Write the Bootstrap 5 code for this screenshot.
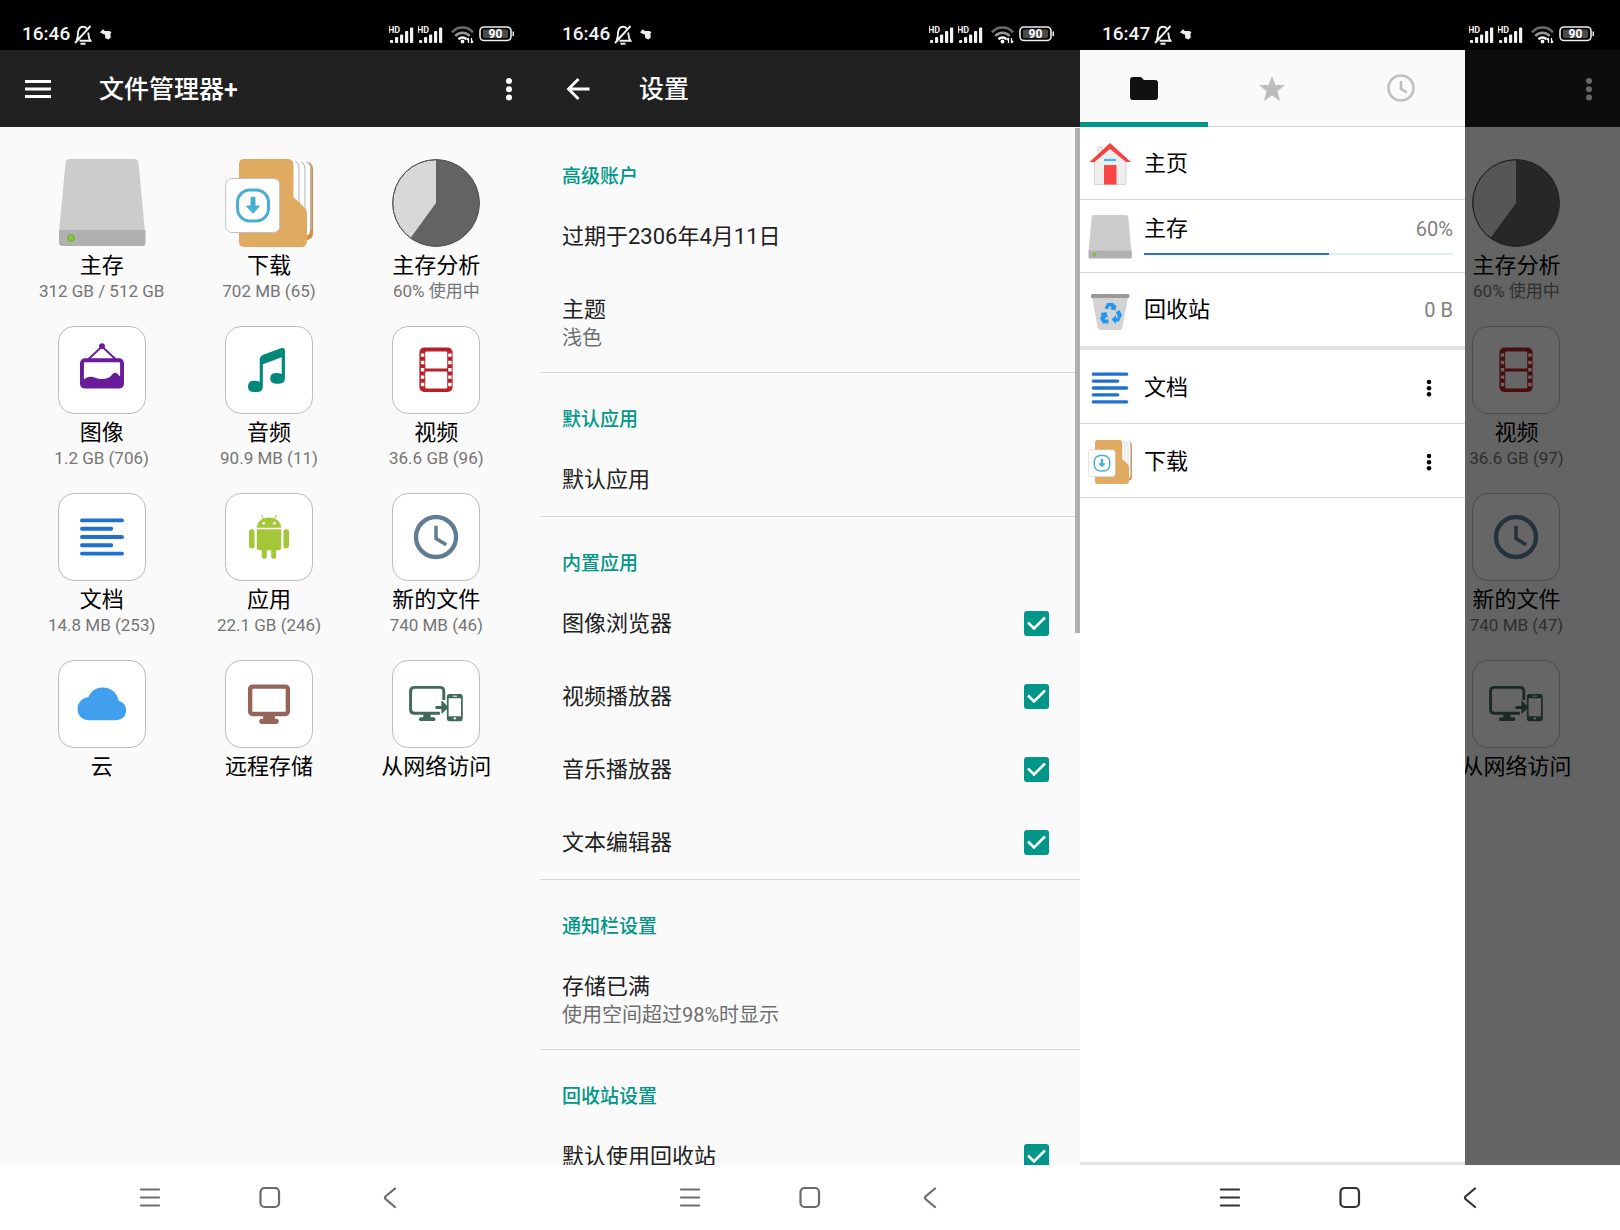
<!DOCTYPE html>
<html lang="zh-CN">
<head>
<meta charset="utf-8">
<meta name="viewport" content="width=device-width, initial-scale=1">
<title>文件管理器+</title>
<link href="https://cdn.jsdelivr.net/npm/bootstrap@5.3.0/dist/css/bootstrap.min.css" rel="stylesheet">
<style>
body { font-family: Roboto, "Noto Sans CJK SC", sans-serif; background: #fff; color: #000; }
svg { display: block; flex-shrink: 0; }
button { border: 0; background: none; padding: 0; color: inherit; font: inherit; }
a { color: inherit; text-decoration: none; }
.status-bar { height: 50px; background: #000; color: #f2f2f2; padding: 18px 25px 0 22px; }
.clock-text { font-size: 19px; line-height: 32px; font-weight: 500; }
.bell { margin: 7px 0 0 4px; }
.app-bar { height: 77px; background: #212121; color: #fff; padding: 0 11px 0 18px; }
.app-title { font-size: 25px; line-height: 32px; font-weight: 500; margin: 0 0 0 41px; padding-top: 2px; }
.icon-btn { width: 40px; height: 40px; display: flex; align-items: center; justify-content: center; }
.screen { background: #fafafa; }
.tile-grid { padding: 32px 20px 0 18px; }
.tile { display: block; height: 167px; text-align: center; white-space: nowrap; }
.tile svg { margin: 0 auto 5px; }
.tile-name { font-size: 22px; line-height: 28px; }
.tile-info { font-size: 17px; line-height: 22px; color: #757575; }
.framed { background: #fff; border: 1px solid #bdbdbd; border-radius: 16px; }
.nav-keys { height: 65px; background: #fff; color: #6c6c6c; }
.nav-keys.strong { color: #333; }
.nav-key { width: 120px; height: 65px; display: flex; align-items: center; justify-content: center; }
.pref-scroll { flex: 1 1 0; min-height: 0; overflow: hidden; padding-top: 2px; }
.pref-head { border-top: 1px solid #d6d6d6; padding: 35px 22px 11px; margin: 0; font-size: 19px; line-height: 24px; font-weight: 500; color: #009688; }
.pref-head.first { border-color: transparent; }
.pref-item { min-height: 73px; padding: 0 31px 0 22px; font-size: 22px; color: #212121; }
.pref-tall { padding: 23px 22px 20px; font-size: 22px; line-height: 28px; color: #212121; }
.pref-note { font-size: 20px; line-height: 28px; color: #6e6e6e; }
.form-check-input.tick { width: 25px; height: 25px; margin: 0; border: 0; border-radius: 3px; }
.form-check-input.tick:checked { background-color: #009688; background-size: 100% 100%; background-image: url("data:image/svg+xml,%3Csvg xmlns='http://www.w3.org/2000/svg' viewBox='0 0 25 25'%3E%3Cpath d='M4 11.5l6 6L21 6.500' fill='none' stroke='%23fff' stroke-width='2.600'/%3E%3C/svg%3E"); }
.scroll-thumb { position: absolute; top: 1px; right: 0; width: 5px; height: 505px; background: #b0b0b0; }
.drawer { flex: 0 0 71.3%; background: #fff; }
.tabs { height: 77px; background: #fafafa; border-bottom: 1px solid #d0d0d0; }
.tab-btn { flex: 1 1 0; height: 77px; display: flex; align-items: center; justify-content: center; color: #bdbdbd; padding-top: 4px; border-bottom: 5px solid transparent; }
.tab-btn.current { color: #111; border-color: #009688; }
.drawer-row { height: 73px; border-bottom: 1px solid #d8d8d8; padding: 1px 12px 0 8px; font-size: 22px; line-height: 28px; }
.drawer-row.last-fixed { border-bottom: 0; }
.drawer-row.folder-row { height: 74px; padding-top: 2px; }
.drawer-gap { height: 4px; background: #e2e2e2; }
.drawer-end { height: 3px; background: #e2e2e2; }
.amount { font-size: 20px; color: #808080; }
.usage-block { padding-bottom: 4px; }
.usage { height: 2px; border-radius: 0; background: #e4eef2; margin-top: 10px; }
.usage .progress-bar { background: #2f6fd0; }
.strip { min-width: 0; overflow: hidden; position: relative; }
.strip-tiles { padding: 32px 20px 0 0; }
.strip-tiles .tile { width: 167px; }
.scrim { position: absolute; inset: 0; background: rgba(0,0,0,.6); }
</style>
<script src="https://cdn.jsdelivr.net/npm/bootstrap@5.3.0/dist/js/bootstrap.bundle.min.js"></script>
</head>
<body>
<svg width="0" height="0" class="position-absolute" aria-hidden="true">
<defs>
<symbol id="i-bell" viewBox="0 0 18 20"><g fill="none" stroke="#f2f2f2" stroke-width="1.900"><path d="M2.500 15C4.600 12.500 3.600 9 4.200 6.500 5 3 7 1.800 9.300 1.800c1.700 0 3 .8 3.900 2.200M14.200 7.500c.5 3 .1 5.500 2.300 8.300H5.500M16.500 1L1 18M6.500 18.800h5"/></g></symbol>
<symbol id="i-blob" viewBox="0 0 10 10"><path d="M0 3.500L2.500 1l1.500 1.500L8 2.500l1.500 1-.8 1.500L9 8 7 9.500 4.500 8.500 4 5.500 2.500 5z" fill="#eee"/></symbol>
<symbol id="i-signal" viewBox="0 0 25 18"><text x="-1" y="7" font-size="9" font-weight="700" fill="#eee" font-family="Roboto, sans-serif">HD</text><g fill="#f2f2f2"><rect x="1" y="14" width="3.200" height="3" rx="1"/><rect x="6" y="11" width="3.200" height="6" rx="1"/><rect x="11" y="8.500" width="3.200" height="8.500" rx="1"/><rect x="16" y="5" width="3.200" height="12" rx="1"/><rect x="21" y="1.500" width="3.200" height="15.500" rx="1"/></g></symbol>
<symbol id="i-wifi" viewBox="0 0 24 18"><g fill="none" stroke-width="2.600"><path d="M1 6.300a14 14 0 0 1 21 0" stroke="#6a6a6a"/><path d="M4.400 10a9.500 9.500 0 0 1 14.200 0" stroke="#9a9a9a"/><path d="M7.500 13.200a5.800 5.800 0 0 1 8 0" stroke="#fff"/></g><circle cx="11.500" cy="15.500" r="1.900" fill="#fff"/><path d="M17.500 12v5M17.500 12l-1.500 2M20.500 17v-5M20.500 17l1.500-2" stroke="#fff" stroke-width="1.300"/></symbol>
<symbol id="i-battery" viewBox="0 0 36 16"><rect x="1" y="1" width="31" height="13.500" rx="4" fill="none" stroke="#eee" stroke-width="1.600"/><rect x="4" y="3.500" width="25" height="8.500" rx="1.500" fill="#4a4a4a"/><rect x="33.500" y="5.500" width="1.500" height="4.500" fill="#eee"/><text x="16.500" y="12" text-anchor="middle" font-size="12" font-weight="700" fill="#fff" font-family="Roboto, sans-serif">90</text></symbol>
<symbol id="i-dots" viewBox="0 0 8 24"><circle cx="4" cy="4" r="3"/><circle cx="4" cy="12.200" r="3"/><circle cx="4" cy="20.400" r="3"/></symbol>
<symbol id="i-drive" viewBox="0 0 88 88"><path d="M12 0h64q4 0 4.500 4L87 73H1L7.500 4Q8 0 12 0z" fill="#cccccd"/><path d="M1 71h86.500v13q0 3-3 3H4q-3 0-3-3z" fill="#b0b0b1"/><circle cx="13" cy="79" r="3.300" fill="#8bc832" stroke="#6fa83a"/></symbol>
<symbol id="i-folder" viewBox="0 0 88 88"><path d="M66 2h15q7 2 7 8v64q0 6-6 7H66z" fill="#cf9046"/><path d="M66 1.500h14q5 1 5 6V72q0 4-4 5H66z" fill="#fff"/><path d="M70 2q4 2 4 7v36M76 3q4 2 4 7v40M81 3q5 2 5 8v60" fill="none" stroke="#b9bfc6" stroke-width="1.200"/><path d="M19 0h44q5.500 0 5.500 6v32L80 49q2 2 2 5v28q0 6-6 6H19q-5 0-5-5V5q0-5 5-5z" fill="#e0ab60"/><rect x=".7" y="19.500" width="54" height="54" rx="6" fill="#fff" stroke="#bfbfbf"/><rect x="12.500" y="31" width="31" height="31" rx="12.500" fill="none" stroke="#49afd2" stroke-width="3"/><path d="M25.500 39q0-1.500 2.500-1.500t2.500 1.500v7.500h3.500q1.500 0 .5 1.300L28.800 54q-.8.900-1.600 0l-5.700-6.200q-1-1.300.5-1.300h3.500z" fill="#49afd2"/></symbol>
<symbol id="i-pie" viewBox="0 0 88 88"><circle cx="44" cy="44" r="43.300" fill="#d8d8d8" stroke="#666"/><path d="M44 44V.7A43.300 43.300 0 1 1 18.500 79z" fill="#636363"/><circle cx="44" cy="44" r="43.300" fill="none" stroke="#555"/></symbol>
<symbol id="i-image" viewBox="0 0 88 88"><g fill="none" stroke="#6a1b9a"><path d="M30 33L44 20l14 13" stroke-width="2"/><rect x="23.500" y="34" width="41" height="27" rx="3" stroke-width="4"/></g><circle cx="44" cy="19.500" r="3" fill="#6a1b9a"/><path d="M24 55q6-6 13-3 5 2 10 1 5-1 7-4 3-4 6-1 2 3 4 3v11H24z" fill="#6a1b9a"/></symbol>
<symbol id="i-music" viewBox="0 0 88 88"><path d="M34.500 34q0-4 3.500-5.500L57 21.500q3.300-1 3.300 2.500v28.500q0 5.500-6 5.500h-3q-6 0-6-5.500t6-5.500q3.500 0 5.700 1V31L37.700 38v22.500q0 6-6.200 6h-3q-6 0-6-5.700t6-5.700q4 0 6 1z" fill="#00897b"/></symbol>
<symbol id="i-film" viewBox="0 0 88 88"><rect x="27" y="21" width="34" height="45.500" rx="5" fill="#b72026"/><g fill="#fff"><rect x="33" y="25" width="22.500" height="17.500" rx="1"/><rect x="33" y="45.500" width="22.500" height="17.500" rx="1"/><path d="M28.500 27H32v3.500h-3.500zM28.500 34.500H32V38h-3.500zM28.500 42H32v3.500h-3.500zM28.500 49.500H32V53h-3.500zM28.500 57H32v3.500h-3.500zM56.500 27H60v3.500h-3.500zM56.500 34.500H60V38h-3.500zM56.500 42H60v3.500h-3.500zM56.500 49.500H60V53h-3.500zM56.500 57H60v3.500h-3.500z"/></g></symbol>
<symbol id="i-lines" viewBox="0 0 88 88"><path d="M23.500 27h41M23.500 35.500h30M23.500 44h41M23.500 52.500h30M23.500 61h41" stroke="#1f70cf" stroke-width="4" stroke-linecap="round"/></symbol>
<symbol id="i-android" viewBox="0 0 88 88"><g fill="#a4c639"><path d="M31.500 34.500C32 28 37 24 44 24s12 4 12.500 10.500z"/><path d="M31.500 36h25v18.500q0 3-3 3h-19q-3 0-3-3z"/><rect x="23.500" y="36" width="5.700" height="19.500" rx="2.600"/><rect x="58.800" y="36" width="5.700" height="19.500" rx="2.600"/><rect x="36.500" y="50" width="5.200" height="16.500" rx="2.500"/><rect x="46.200" y="50" width="5.200" height="16.500" rx="2.500"/><path d="M36.500 21.500l2.500 4.500M51.500 21.500L49 26" stroke="#a4c639"/></g><circle cx="38.500" cy="30" r="1.400" fill="#fff"/><circle cx="49.500" cy="30" r="1.400" fill="#fff"/></symbol>
<symbol id="i-recent" viewBox="0 0 88 88"><g fill="none" stroke="#607d94"><circle cx="44" cy="44" r="20.500" stroke-width="4.500"/><path d="M44 32.500v13l10.500 6.500" stroke-width="3.600"/></g></symbol>
<symbol id="i-cloud" viewBox="0 0 88 88"><path d="M31 60.500C24 60.500 19 56 19 49c0-7 5-11.500 11-12 2.500-6 7.500-10 14.500-10 9 0 15.500 5.500 16.500 14 4.500.8 7.700 4.500 7.700 9.500 0 6-4.200 10-9.700 10z" fill="#429fed"/></symbol>
<symbol id="i-monitor" viewBox="0 0 88 88"><rect x="24.700" y="26.200" width="38.600" height="28" rx="2.500" fill="none" stroke="#95655a" stroke-width="4.500"/><path d="M38 55h12v4h1.500q2.500 0 2.500 2.700t-2.500 2.700h-15q-2.500 0-2.500-2.700t2.500-2.700H38z" fill="#95655a"/></symbol>
<symbol id="i-network" viewBox="0 0 88 88"><g fill="#426a5b"><path d="M52 40V31q0-4-4-4H22q-4 0-4 4v18.500q0 4 4 4h26" fill="none" stroke="#426a5b" stroke-width="3"/><path d="M31 54h7.500v3.500h3q2 0 2 2t-2 2h-13q-2 0-2-2t2-2H31z"/><path d="M43.500 46h6v-4.500q0-1 1-.5l6.500 6.500-6.500 6q-1 .7-1-.5v-4h-6z"/><rect x="56" y="34.700" width="14.500" height="26" rx="2" fill="none" stroke="#426a5b" stroke-width="1.800"/><path d="M56 34.500h14.500v3.500H56zM56 56.500h14.500v4H56z"/></g><path d="M61 36h4.500" stroke="#fff"/><circle cx="63.200" cy="58.700" r="1.200" fill="#fff"/></symbol>
<symbol id="i-house" viewBox="0 0 44 44"><path d="M10 11V5h4v5" fill="none" stroke="#ccc"/><path d="M6.500 18L22 5l16 13v24.500h-31.500z" fill="#eee" stroke="#d5d5d5"/><path d="M1.500 20L22 1l21 19h-5L22 7 6.500 20z" fill="#f44343"/><path d="M16 18h12" stroke="#48b5e6" stroke-width="2.200"/><rect x="16" y="23" width="12.500" height="19.500" fill="#fb4444"/></symbol>
<symbol id="i-bin" viewBox="0 0 44 44"><path d="M4 9h36l-5.500 30q-.5 3-3.500 3H13q-3 0-3.500-3z" fill="#d3d3d3"/><rect x="3" y="6" width="38.500" height="4" rx="1.500" fill="#999"/><g fill="#2196f3" transform="translate(0 1)"><path d="M16.500 19l3-5h6l1.500 2.500 1.500-.5-1 5.500-5.500-1.500 1.500-1-1.500-2.500-2.500 4z"/><path d="M13 24l5.500-1 1.500 5.500-2-.5-1.500 2.500h4v4h-5.500l-3-5 1.500-2.500z"/><path d="M28 23l3.500-2 2.500 5-3 6.500h-3V35l-4.500-4.500 4.500-4.500v2.500h2z"/></g></symbol>
<symbol id="i-list" viewBox="0 0 20 20"><path d="M1 1.500h18M1 9.500h18M1 17.500h18" stroke="currentColor" stroke-width="2.200" stroke-linecap="round"/></symbol>
<symbol id="i-square" viewBox="0 0 22 22"><rect x="1.500" y="1" width="18.500" height="19" rx="4" fill="none" stroke="currentColor" stroke-width="2.200"/></symbol>
<symbol id="i-chev" viewBox="0 0 14 22"><path d="M12 1.500L2.500 9.500q-1 1.300 0 2.600L12 20" fill="none" stroke="currentColor" stroke-width="2.200" stroke-linecap="round"/></symbol>
</defs>
</svg>

<div class="row g-0 min-vh-100">
  <!-- 主屏幕 -->
  <section class="col-4 d-flex flex-column">
    <div class="status-bar d-flex align-items-start">
      <span class="clock-text">16:46</span>
      <svg class="bell" width="18" height="20"><use href="#i-bell"/></svg>
      <svg class="mt-2 ms-2" width="12" height="16"><use href="#i-blob"/></svg>
      <div class="d-flex align-items-start ms-auto pt-2">
        <svg width="25" height="18"><use href="#i-signal"/></svg>
        <svg class="ms-1" width="25" height="18"><use href="#i-signal"/></svg>
        <svg class="ms-2" width="24" height="18"><use href="#i-wifi"/></svg>
        <svg class="ms-1" width="36" height="16"><use href="#i-battery"/></svg>
      </div>
    </div>
    <header class="app-bar d-flex align-items-center">
      <button class="icon-btn" type="button" aria-label="菜单"><svg width="26" height="18" viewBox="0 0 26 18"><path d="M0 1.500h26M0 9h26M0 16.500h26" stroke="#fff" stroke-width="3"/></svg></button>
      <h1 class="app-title">文件管理器+</h1>
      <button class="icon-btn ms-auto" type="button" aria-label="更多"><svg width="8" height="24" fill="#fff"><use href="#i-dots"/></svg></button>
    </header>
    <main class="screen flex-grow-1 tile-grid">
      <div class="row g-0">
        <div class="col-4"><a href="#" class="tile"><svg width="88" height="88"><use href="#i-drive"/></svg><div class="tile-name">主存</div><div class="tile-info">312 GB / 512 GB</div></a></div>
        <div class="col-4"><a href="#" class="tile"><svg width="88" height="88"><use href="#i-folder"/></svg><div class="tile-name">下载</div><div class="tile-info">702 MB (65)</div></a></div>
        <div class="col-4"><a href="#" class="tile"><svg width="88" height="88"><use href="#i-pie"/></svg><div class="tile-name">主存分析</div><div class="tile-info">60% 使用中</div></a></div>
        <div class="col-4"><a href="#" class="tile"><svg class="framed" width="88" height="88"><use href="#i-image"/></svg><div class="tile-name">图像</div><div class="tile-info">1.2 GB (706)</div></a></div>
        <div class="col-4"><a href="#" class="tile"><svg class="framed" width="88" height="88"><use href="#i-music"/></svg><div class="tile-name">音频</div><div class="tile-info">90.9 MB (11)</div></a></div>
        <div class="col-4"><a href="#" class="tile"><svg class="framed" width="88" height="88"><use href="#i-film"/></svg><div class="tile-name">视频</div><div class="tile-info">36.6 GB (96)</div></a></div>
        <div class="col-4"><a href="#" class="tile"><svg class="framed" width="88" height="88"><use href="#i-lines"/></svg><div class="tile-name">文档</div><div class="tile-info">14.8 MB (253)</div></a></div>
        <div class="col-4"><a href="#" class="tile"><svg class="framed" width="88" height="88"><use href="#i-android"/></svg><div class="tile-name">应用</div><div class="tile-info">22.1 GB (246)</div></a></div>
        <div class="col-4"><a href="#" class="tile"><svg class="framed" width="88" height="88"><use href="#i-recent"/></svg><div class="tile-name">新的文件</div><div class="tile-info">740 MB (46)</div></a></div>
        <div class="col-4"><a href="#" class="tile"><svg class="framed" width="88" height="88"><use href="#i-cloud"/></svg><div class="tile-name">云</div></a></div>
        <div class="col-4"><a href="#" class="tile"><svg class="framed" width="88" height="88"><use href="#i-monitor"/></svg><div class="tile-name">远程存储</div></a></div>
        <div class="col-4"><a href="#" class="tile"><svg class="framed" width="88" height="88"><use href="#i-network"/></svg><div class="tile-name">从网络访问</div></a></div>
      </div>
    </main>
    <nav class="nav-keys d-flex justify-content-center">
      <button class="nav-key" type="button" aria-label="最近任务"><svg width="20" height="20"><use href="#i-list"/></svg></button>
      <button class="nav-key" type="button" aria-label="主屏幕"><svg width="22" height="22"><use href="#i-square"/></svg></button>
      <button class="nav-key" type="button" aria-label="返回"><svg width="14" height="22"><use href="#i-chev"/></svg></button>
    </nav>
  </section>

  <!-- 设置 -->
  <section class="col-4 d-flex flex-column">
    <div class="status-bar d-flex align-items-start">
      <span class="clock-text">16:46</span>
      <svg class="bell" width="18" height="20"><use href="#i-bell"/></svg>
      <svg class="mt-2 ms-2" width="12" height="16"><use href="#i-blob"/></svg>
      <div class="d-flex align-items-start ms-auto pt-2">
        <svg width="25" height="18"><use href="#i-signal"/></svg>
        <svg class="ms-1" width="25" height="18"><use href="#i-signal"/></svg>
        <svg class="ms-2" width="24" height="18"><use href="#i-wifi"/></svg>
        <svg class="ms-1" width="36" height="16"><use href="#i-battery"/></svg>
      </div>
    </div>
    <header class="app-bar d-flex align-items-center">
      <button class="icon-btn" type="button" aria-label="返回"><svg width="24" height="22" viewBox="0 0 24 22"><path d="M23.500 11H3M12.500 1L2.500 11l10 10" fill="none" stroke="#fff" stroke-width="2.800"/></svg></button>
      <h2 class="app-title">设置</h2>
    </header>
    <main class="screen pref-scroll position-relative">
      <h3 class="pref-head first">高级账户</h3>
      <div class="pref-item d-flex align-items-center">过期于2306年4月11日</div>
      <div class="pref-tall"><div>主题</div><div class="pref-note">浅色</div></div>
      <h3 class="pref-head">默认应用</h3>
      <div class="pref-item d-flex align-items-center">默认应用</div>
      <h3 class="pref-head">内置应用</h3>
      <div class="pref-item d-flex align-items-center justify-content-between"><label for="p1">图像浏览器</label><input class="form-check-input tick" type="checkbox" id="p1" checked></div>
      <div class="pref-item d-flex align-items-center justify-content-between"><label for="p2">视频播放器</label><input class="form-check-input tick" type="checkbox" id="p2" checked></div>
      <div class="pref-item d-flex align-items-center justify-content-between"><label for="p3">音乐播放器</label><input class="form-check-input tick" type="checkbox" id="p3" checked></div>
      <div class="pref-item d-flex align-items-center justify-content-between"><label for="p4">文本编辑器</label><input class="form-check-input tick" type="checkbox" id="p4" checked></div>
      <h3 class="pref-head">通知栏设置</h3>
      <div class="pref-tall"><div>存储已满</div><div class="pref-note">使用空间超过98%时显示</div></div>
      <h3 class="pref-head">回收站设置</h3>
      <div class="pref-item d-flex align-items-center justify-content-between"><label for="p5">默认使用回收站</label><input class="form-check-input tick" type="checkbox" id="p5" checked></div>
      <div class="scroll-thumb"></div>
    </main>
    <nav class="nav-keys d-flex justify-content-center">
      <button class="nav-key" type="button" aria-label="最近任务"><svg width="20" height="20"><use href="#i-list"/></svg></button>
      <button class="nav-key" type="button" aria-label="主屏幕"><svg width="22" height="22"><use href="#i-square"/></svg></button>
      <button class="nav-key" type="button" aria-label="返回"><svg width="14" height="22"><use href="#i-chev"/></svg></button>
    </nav>
  </section>

  <!-- 侧边栏 -->
  <section class="col-4 d-flex flex-column">
    <div class="status-bar d-flex align-items-start">
      <span class="clock-text">16:47</span>
      <svg class="bell" width="18" height="20"><use href="#i-bell"/></svg>
      <svg class="mt-2 ms-2" width="12" height="16"><use href="#i-blob"/></svg>
      <div class="d-flex align-items-start ms-auto pt-2">
        <svg width="25" height="18"><use href="#i-signal"/></svg>
        <svg class="ms-1" width="25" height="18"><use href="#i-signal"/></svg>
        <svg class="ms-2" width="24" height="18"><use href="#i-wifi"/></svg>
        <svg class="ms-1" width="36" height="16"><use href="#i-battery"/></svg>
      </div>
    </div>
    <div class="flex-grow-1 d-flex">
      <aside class="drawer d-flex flex-column">
        <div class="tabs d-flex">
          <button class="tab-btn current" type="button" aria-label="文件夹"><svg width="28" height="23" viewBox="0 0 28 23"><path d="M3 0h8l3 3h11q3 0 3 3v14q0 3-3 3H3q-3 0-3-3V3q0-3 3-3z" fill="currentColor"/></svg></button>
          <button class="tab-btn" type="button" aria-label="收藏"><svg width="26" height="25" viewBox="0 0 26 25"><path d="M13 0l3.400 9H26l-7.500 6.200L21 25l-8-5.500L5 25l2.500-9.800L0 9h9.600z" fill="currentColor"/></svg></button>
          <button class="tab-btn" type="button" aria-label="最近"><svg width="28" height="28" viewBox="0 0 28 28" fill="none" stroke="currentColor" stroke-width="2.500"><circle cx="14" cy="14" r="12.500"/><path d="M14 7v8l6 3.500"/></svg></button>
        </div>
        <a href="#" class="drawer-row d-flex align-items-center"><svg width="44" height="44"><use href="#i-house"/></svg><span class="ps-2 ms-1">主页</span></a>
        <a href="#" class="drawer-row d-flex align-items-center"><svg width="44" height="44"><use href="#i-drive"/></svg>
          <div class="usage-block flex-grow-1 ps-2 ms-1"><div class="d-flex justify-content-between"><span>主存</span><span class="amount">60%</span></div>
            <div class="progress usage" role="progressbar" aria-label="主存" aria-valuenow="60" aria-valuemin="0" aria-valuemax="100"><div class="progress-bar" style="width:60%"></div></div></div></a>
        <a href="#" class="drawer-row last-fixed d-flex align-items-center"><svg width="44" height="44"><use href="#i-bin"/></svg><span class="ps-2 ms-1">回收站</span><span class="amount ms-auto">0 B</span></a>
        <div class="drawer-gap"></div>
        <div class="drawer-row folder-row d-flex align-items-center"><svg width="44" height="44" viewBox="17 17 54 54"><use href="#i-lines" width="88" height="88"/></svg><a href="#" class="ps-2 ms-1">文档</a><button class="icon-btn ms-auto me-1" type="button" aria-label="更多"><svg width="6" height="18"><use href="#i-dots"/></svg></button></div>
        <div class="drawer-row folder-row d-flex align-items-center"><svg width="44" height="44"><use href="#i-folder"/></svg><a href="#" class="ps-2 ms-1">下载</a><button class="icon-btn ms-auto me-1" type="button" aria-label="更多"><svg width="6" height="18"><use href="#i-dots"/></svg></button></div>
        <div class="drawer-end mt-auto"></div>
      </aside>
      <div class="strip screen flex-grow-1">
        <div class="app-bar d-flex align-items-center"><button class="icon-btn ms-auto" type="button" aria-label="更多"><svg width="8" height="24" fill="#fff"><use href="#i-dots"/></svg></button></div>
        <div class="strip-tiles d-flex flex-column align-items-end">
          <div class="tile"><svg width="88" height="88"><use href="#i-pie"/></svg><div class="tile-name">主存分析</div><div class="tile-info">60% 使用中</div></div>
          <div class="tile"><svg class="framed" width="88" height="88"><use href="#i-film"/></svg><div class="tile-name">视频</div><div class="tile-info">36.6 GB (97)</div></div>
          <div class="tile"><svg class="framed" width="88" height="88"><use href="#i-recent"/></svg><div class="tile-name">新的文件</div><div class="tile-info">740 MB (47)</div></div>
          <div class="tile"><svg class="framed" width="88" height="88"><use href="#i-network"/></svg><div class="tile-name">从网络访问</div></div>
        </div>
        <div class="scrim"></div>
      </div>
    </div>
    <nav class="nav-keys strong d-flex justify-content-center">
      <button class="nav-key" type="button" aria-label="最近任务"><svg width="20" height="20"><use href="#i-list"/></svg></button>
      <button class="nav-key" type="button" aria-label="主屏幕"><svg width="22" height="22"><use href="#i-square"/></svg></button>
      <button class="nav-key" type="button" aria-label="返回"><svg width="14" height="22"><use href="#i-chev"/></svg></button>
    </nav>
  </section>
</div>
</body>
</html>
